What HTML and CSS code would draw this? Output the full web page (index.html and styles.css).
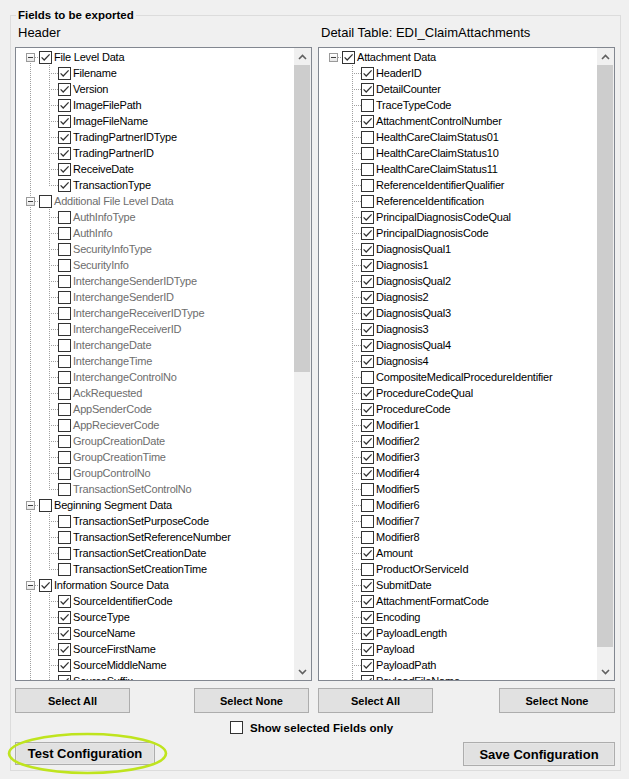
FILE: index.html
```html
<!DOCTYPE html>
<html>
<head>
<meta charset="utf-8">
<link rel="stylesheet" href="styles.css">
</head>
<body>
<fieldset class="group">
  <legend class="legend">Fields to be exported</legend>
  <div class="cols">
    <div class="col">
      <div class="col-title">Header</div>
      <div class="tree">
        <div class="tree-body multi">
          <div class="node">
            <div class="row root"><span class="exp"></span><span class="hd"></span><span class="cb on"></span><span class="lbl">File Level Data</span></div>
            <div class="kids">
              <div class="row kid"><span class="hd"></span><span class="cb on"></span><span class="lbl">Filename</span></div>
              <div class="row kid"><span class="hd"></span><span class="cb on"></span><span class="lbl">Version</span></div>
              <div class="row kid"><span class="hd"></span><span class="cb on"></span><span class="lbl">ImageFilePath</span></div>
              <div class="row kid"><span class="hd"></span><span class="cb on"></span><span class="lbl">ImageFileName</span></div>
              <div class="row kid"><span class="hd"></span><span class="cb on"></span><span class="lbl">TradingPartnerIDType</span></div>
              <div class="row kid"><span class="hd"></span><span class="cb on"></span><span class="lbl">TradingPartnerID</span></div>
              <div class="row kid"><span class="hd"></span><span class="cb on"></span><span class="lbl">ReceiveDate</span></div>
              <div class="row kid"><span class="hd"></span><span class="cb on"></span><span class="lbl">TransactionType</span></div>
            </div>
          </div>
          <div class="node dis">
            <div class="row root"><span class="exp"></span><span class="hd"></span><span class="cb"></span><span class="lbl">Additional File Level Data</span></div>
            <div class="kids">
              <div class="row kid"><span class="hd"></span><span class="cb"></span><span class="lbl">AuthInfoType</span></div>
              <div class="row kid"><span class="hd"></span><span class="cb"></span><span class="lbl">AuthInfo</span></div>
              <div class="row kid"><span class="hd"></span><span class="cb"></span><span class="lbl">SecurityInfoType</span></div>
              <div class="row kid"><span class="hd"></span><span class="cb"></span><span class="lbl">SecurityInfo</span></div>
              <div class="row kid"><span class="hd"></span><span class="cb"></span><span class="lbl">InterchangeSenderIDType</span></div>
              <div class="row kid"><span class="hd"></span><span class="cb"></span><span class="lbl">InterchangeSenderID</span></div>
              <div class="row kid"><span class="hd"></span><span class="cb"></span><span class="lbl">InterchangeReceiverIDType</span></div>
              <div class="row kid"><span class="hd"></span><span class="cb"></span><span class="lbl">InterchangeReceiverID</span></div>
              <div class="row kid"><span class="hd"></span><span class="cb"></span><span class="lbl">InterchangeDate</span></div>
              <div class="row kid"><span class="hd"></span><span class="cb"></span><span class="lbl">InterchangeTime</span></div>
              <div class="row kid"><span class="hd"></span><span class="cb"></span><span class="lbl">InterchangeControlNo</span></div>
              <div class="row kid"><span class="hd"></span><span class="cb"></span><span class="lbl">AckRequested</span></div>
              <div class="row kid"><span class="hd"></span><span class="cb"></span><span class="lbl">AppSenderCode</span></div>
              <div class="row kid"><span class="hd"></span><span class="cb"></span><span class="lbl">AppRecieverCode</span></div>
              <div class="row kid"><span class="hd"></span><span class="cb"></span><span class="lbl">GroupCreationDate</span></div>
              <div class="row kid"><span class="hd"></span><span class="cb"></span><span class="lbl">GroupCreationTime</span></div>
              <div class="row kid"><span class="hd"></span><span class="cb"></span><span class="lbl">GroupControlNo</span></div>
              <div class="row kid"><span class="hd"></span><span class="cb"></span><span class="lbl">TransactionSetControlNo</span></div>
            </div>
          </div>
          <div class="node">
            <div class="row root"><span class="exp"></span><span class="hd"></span><span class="cb"></span><span class="lbl">Beginning Segment Data</span></div>
            <div class="kids">
              <div class="row kid"><span class="hd"></span><span class="cb"></span><span class="lbl">TransactionSetPurposeCode</span></div>
              <div class="row kid"><span class="hd"></span><span class="cb"></span><span class="lbl">TransactionSetReferenceNumber</span></div>
              <div class="row kid"><span class="hd"></span><span class="cb"></span><span class="lbl">TransactionSetCreationDate</span></div>
              <div class="row kid"><span class="hd"></span><span class="cb"></span><span class="lbl">TransactionSetCreationTime</span></div>
            </div>
          </div>
          <div class="node">
            <div class="row root"><span class="exp"></span><span class="hd"></span><span class="cb on"></span><span class="lbl">Information Source Data</span></div>
            <div class="kids open">
              <div class="row kid"><span class="hd"></span><span class="cb on"></span><span class="lbl">SourceIdentifierCode</span></div>
              <div class="row kid"><span class="hd"></span><span class="cb on"></span><span class="lbl">SourceType</span></div>
              <div class="row kid"><span class="hd"></span><span class="cb on"></span><span class="lbl">SourceName</span></div>
              <div class="row kid"><span class="hd"></span><span class="cb on"></span><span class="lbl">SourceFirstName</span></div>
              <div class="row kid"><span class="hd"></span><span class="cb on"></span><span class="lbl">SourceMiddleName</span></div>
              <div class="row kid"><span class="hd"></span><span class="cb on"></span><span class="lbl">SourceSuffix</span></div>
            </div>
          </div>
        </div>
        <div class="sb">
          <div class="sb-btn"><svg width="9" height="6" viewBox="0 0 9 6"><path d="M1 5 L4.5 1.5 L8 5" fill="none" stroke="#606060" stroke-width="1.6"/></svg></div>
          <div class="sb-track"><div class="thumb thumb-left"></div></div>
          <div class="sb-btn"><svg width="9" height="6" viewBox="0 0 9 6"><path d="M1 1 L4.5 4.5 L8 1" fill="none" stroke="#606060" stroke-width="1.6"/></svg></div>
        </div>
      </div>
      <div class="btnrow btnrow-left">
        <button class="btn">Select All</button>
        <button class="btn">Select None</button>
      </div>
    </div>
    <div class="col">
      <div class="col-title">Detail Table: EDI_ClaimAttachments</div>
      <div class="tree">
        <div class="tree-body">
          <div class="node">
            <div class="row root"><span class="exp"></span><span class="hd"></span><span class="cb on"></span><span class="lbl">Attachment Data</span></div>
            <div class="kids open">
              <div class="row kid"><span class="hd"></span><span class="cb on"></span><span class="lbl">HeaderID</span></div>
              <div class="row kid"><span class="hd"></span><span class="cb on"></span><span class="lbl">DetailCounter</span></div>
              <div class="row kid"><span class="hd"></span><span class="cb"></span><span class="lbl">TraceTypeCode</span></div>
              <div class="row kid"><span class="hd"></span><span class="cb on"></span><span class="lbl">AttachmentControlNumber</span></div>
              <div class="row kid"><span class="hd"></span><span class="cb"></span><span class="lbl">HealthCareClaimStatus01</span></div>
              <div class="row kid"><span class="hd"></span><span class="cb"></span><span class="lbl">HealthCareClaimStatus10</span></div>
              <div class="row kid"><span class="hd"></span><span class="cb"></span><span class="lbl">HealthCareClaimStatus11</span></div>
              <div class="row kid"><span class="hd"></span><span class="cb"></span><span class="lbl">ReferenceIdentifierQualifier</span></div>
              <div class="row kid"><span class="hd"></span><span class="cb"></span><span class="lbl">ReferenceIdentification</span></div>
              <div class="row kid"><span class="hd"></span><span class="cb on"></span><span class="lbl">PrincipalDiagnosisCodeQual</span></div>
              <div class="row kid"><span class="hd"></span><span class="cb on"></span><span class="lbl">PrincipalDiagnosisCode</span></div>
              <div class="row kid"><span class="hd"></span><span class="cb on"></span><span class="lbl">DiagnosisQual1</span></div>
              <div class="row kid"><span class="hd"></span><span class="cb on"></span><span class="lbl">Diagnosis1</span></div>
              <div class="row kid"><span class="hd"></span><span class="cb on"></span><span class="lbl">DiagnosisQual2</span></div>
              <div class="row kid"><span class="hd"></span><span class="cb on"></span><span class="lbl">Diagnosis2</span></div>
              <div class="row kid"><span class="hd"></span><span class="cb on"></span><span class="lbl">DiagnosisQual3</span></div>
              <div class="row kid"><span class="hd"></span><span class="cb on"></span><span class="lbl">Diagnosis3</span></div>
              <div class="row kid"><span class="hd"></span><span class="cb on"></span><span class="lbl">DiagnosisQual4</span></div>
              <div class="row kid"><span class="hd"></span><span class="cb on"></span><span class="lbl">Diagnosis4</span></div>
              <div class="row kid"><span class="hd"></span><span class="cb"></span><span class="lbl">CompositeMedicalProcedureIdentifier</span></div>
              <div class="row kid"><span class="hd"></span><span class="cb on"></span><span class="lbl">ProcedureCodeQual</span></div>
              <div class="row kid"><span class="hd"></span><span class="cb on"></span><span class="lbl">ProcedureCode</span></div>
              <div class="row kid"><span class="hd"></span><span class="cb on"></span><span class="lbl">Modifier1</span></div>
              <div class="row kid"><span class="hd"></span><span class="cb on"></span><span class="lbl">Modifier2</span></div>
              <div class="row kid"><span class="hd"></span><span class="cb on"></span><span class="lbl">Modifier3</span></div>
              <div class="row kid"><span class="hd"></span><span class="cb on"></span><span class="lbl">Modifier4</span></div>
              <div class="row kid"><span class="hd"></span><span class="cb"></span><span class="lbl">Modifier5</span></div>
              <div class="row kid"><span class="hd"></span><span class="cb"></span><span class="lbl">Modifier6</span></div>
              <div class="row kid"><span class="hd"></span><span class="cb"></span><span class="lbl">Modifier7</span></div>
              <div class="row kid"><span class="hd"></span><span class="cb"></span><span class="lbl">Modifier8</span></div>
              <div class="row kid"><span class="hd"></span><span class="cb on"></span><span class="lbl">Amount</span></div>
              <div class="row kid"><span class="hd"></span><span class="cb"></span><span class="lbl">ProductOrServiceId</span></div>
              <div class="row kid"><span class="hd"></span><span class="cb on"></span><span class="lbl">SubmitDate</span></div>
              <div class="row kid"><span class="hd"></span><span class="cb on"></span><span class="lbl">AttachmentFormatCode</span></div>
              <div class="row kid"><span class="hd"></span><span class="cb on"></span><span class="lbl">Encoding</span></div>
              <div class="row kid"><span class="hd"></span><span class="cb on"></span><span class="lbl">PayloadLength</span></div>
              <div class="row kid"><span class="hd"></span><span class="cb on"></span><span class="lbl">Payload</span></div>
              <div class="row kid"><span class="hd"></span><span class="cb on"></span><span class="lbl">PayloadPath</span></div>
              <div class="row kid"><span class="hd"></span><span class="cb on"></span><span class="lbl">PayloadFileName</span></div>
            </div>
          </div>
        </div>
        <div class="sb">
          <div class="sb-btn"><svg width="9" height="6" viewBox="0 0 9 6"><path d="M1 5 L4.5 1.5 L8 5" fill="none" stroke="#606060" stroke-width="1.6"/></svg></div>
          <div class="sb-track"><div class="thumb thumb-right"></div></div>
          <div class="sb-btn"><svg width="9" height="6" viewBox="0 0 9 6"><path d="M1 1 L4.5 4.5 L8 1" fill="none" stroke="#606060" stroke-width="1.6"/></svg></div>
        </div>
      </div>
      <div class="btnrow btnrow-right">
        <button class="btn">Select All</button>
        <button class="btn">Select None</button>
      </div>
    </div>
  </div>
  <label class="showrow"><span class="cb big"></span><span>Show selected Fields only</span></label>
  <div class="bottom">
    <button class="btn big-btn test">Test Configuration</button>
    <button class="btn big-btn save">Save Configuration</button>
  </div>
</fieldset>
<svg class="highlight" width="162" height="44" viewBox="0 0 162 44"><ellipse cx="80.5" cy="21.5" rx="78.5" ry="19.5" fill="none" stroke="#bfe41e" stroke-width="2.6"/></svg>
</body>
</html>
```
FILE: styles.css
```css
* { box-sizing: border-box; }

html, body {
  margin: 0;
  background: #f0f0f0;
}

body {
  width: 629px;
  height: 779px;
  overflow: hidden;
  position: relative;
  font-family: "Liberation Sans", Arial, sans-serif;
  color: #000;
}

.group {
  margin: 9px 8px 0 10px;
  border: 1px solid #dcdcdc;
  padding: 0 5px 4px 4px;
  min-width: 0;
}

.legend {
  font-size: 11.5px;
  font-weight: bold;
  line-height: 13px;
  padding: 0 2px;
  margin-left: 1px;
}

.cols {
  display: grid;
  grid-template-columns: 297px 297px;
  column-gap: 6px;
}

.col-title {
  font-size: 13px;
  line-height: 15px;
  height: 15px;
  margin: 3px 0 7px 3px;
  white-space: nowrap;
}

.tree {
  height: 634px;
  border: 1px solid #828790;
  background: #fff;
  display: flex;
}

.tree-body {
  flex: 1;
  overflow: hidden;
  padding-top: 1px;
}

.tree-body.multi {
  background: repeating-linear-gradient(to bottom, #a0a0a0 0 1px, transparent 1px 2px) 14px 9px / 1px 100% no-repeat;
}

.kids {
  background: repeating-linear-gradient(to bottom, #a0a0a0 0 1px, transparent 1px 2px) 33px 0 / 1px calc(100% - 8px) no-repeat;
}

.kids.open {
  background-size: 1px 100%;
}

.row {
  display: flex;
  align-items: center;
  height: 16px;
  white-space: nowrap;
  font-size: 11px;
  letter-spacing: -0.2px;
}

.row.root { padding-left: 10px; }
.row.kid { padding-left: 33px; }

.exp {
  flex: none;
  width: 9px;
  height: 9px;
  border: 1px solid #9a9a9a;
  background: linear-gradient(#ffffff, #e6e6e6);
  display: flex;
  align-items: center;
  justify-content: center;
}

.exp::after {
  content: "";
  width: 5px;
  height: 1px;
  background: #3c3c3c;
}

.hd {
  flex: none;
  width: 4px;
  height: 1px;
  background: repeating-linear-gradient(to right, #a0a0a0 0 1px, transparent 1px 2px);
}

.kid .hd { width: 9px; }

.cb {
  flex: none;
  width: 13px;
  height: 13px;
  border: 1px solid #333;
  background: #fff;
}

.cb.on {
  background: #fff url("data:image/svg+xml,%3Csvg xmlns='http://www.w3.org/2000/svg' width='11' height='11' viewBox='0 0 11 11'%3E%3Cpath d='M1.6 5.4 L4.2 8 L9.6 2.4' fill='none' stroke='%23333' stroke-width='1.25'/%3E%3C/svg%3E") no-repeat center;
}

.lbl {
  margin-left: 2px;
  line-height: 16px;
}

.dis .lbl { color: #6d6d6d; }

.sb {
  flex: none;
  width: 17px;
  background: #f0f0f0;
  display: flex;
  flex-direction: column;
}

.sb-btn {
  height: 17px;
  display: flex;
  align-items: center;
  justify-content: center;
}

.sb-btn svg { display: block; }

.sb-track { flex: 1; }

.thumb {
  width: 16px;
  background: #cdcdcd;
}

.thumb-left { height: 307px; }
.thumb-right { height: 582px; }

.btnrow {
  display: flex;
  justify-content: space-between;
  margin-top: 7px;
}

.btnrow-left { padding-right: 3px; }

.btn {
  width: 115px;
  height: 25px;
  border: 1px solid #adadad;
  background: #e1e1e1;
  font-family: "Liberation Sans", Arial, sans-serif;
  font-weight: bold;
  font-size: 11px;
  color: #000;
  padding: 0;
  margin: 0;
}

.btnrow-right .btn:last-child { width: 116px; }

.showrow {
  display: flex;
  align-items: center;
  height: 13px;
  margin-top: 8px;
  padding-left: 215px;
  gap: 7px;
  font-size: 11.5px;
  font-weight: bold;
  white-space: nowrap;
}

.bottom {
  display: flex;
  justify-content: space-between;
  align-items: flex-start;
  margin-top: 8px;
}

.big-btn {
  font-size: 13px;
  box-shadow: inset 0 0 0 1px #e6e6e6;
}

.test { width: 140px; height: 23px; }
.save { width: 152px; height: 24px; }

.highlight {
  position: absolute;
  left: 7px;
  top: 732px;
}
```
